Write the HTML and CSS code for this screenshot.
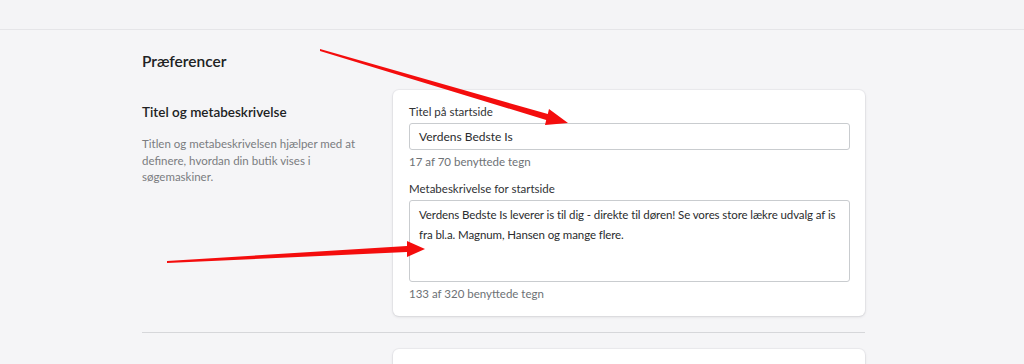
FILE: index.html
```html
<!DOCTYPE html>
<html lang="da">
<head>
  <meta charset="UTF-8" />
  <meta name="viewport" content="width=device-width, initial-scale=1.0" />
  <title>Præferencer</title>
  <link rel="stylesheet" href="styles.css">
</head>
<body>

  <div class="topbar"></div>

  <div class="page">
    <h1 class="page-title">Præferencer</h1>

    <div class="section">
      <div class="section-info">
        <h2>Titel og metabeskrivelse</h2>
        <p>Titlen og metabeskrivelsen hjælper med at definere, hvordan din butik vises i søgemaskiner.</p>
      </div>

      <div class="card">
        <label class="field-label">Titel på startside</label>
        <div class="field-input">Verdens Bedste Is</div>
        <div class="field-help">17 af 70 benyttede tegn</div>

        <label class="field-label">Metabeskrivelse for startside</label>
        <div class="field-input field-area">Verdens Bedste Is leverer is til dig - direkte til døren! Se vores store lækre udvalg af is fra bl.a. Magnum, Hansen og mange flere.</div>
        <div class="field-help">133 af 320 benyttede tegn</div>
      </div>
    </div>

    <hr class="divider">

    <div class="section section-next">
      <div class="section-info"></div>
      <div class="card card-next"></div>
    </div>
  </div>

  <!-- red arrows drawn over the screenshot -->
  <svg class="arrows" width="1024" height="364" viewBox="0 0 1024 364">
    <polygon fill="#f40d0d" points="320,49 547.8,114 549,109 568,123 545,125 546.2,120 320,51" />
    <polygon fill="#f40d0d" points="167,261 407,246 407,241 425,249 407,257 407,252 167,263" />
  </svg>

</body>
</html>
```

FILE: styles.css
```css
body {
  margin: 0;
  background-color: #f5f5f7;
  font-family: Lato, "Noto Sans", sans-serif;
  color: #202223;
  height: 364px;
  overflow: hidden;
  position: relative;
}

.topbar {
  height: 29px;
  background-color: #f4f4f6;
  border-bottom: 1px solid #e5e5e8;
}

.page {
  width: 723px;
  margin-left: 142px;
}

.page-title {
  font-size: 15.5px;
  font-weight: 600;
  margin: 20px 0 0 0;
  line-height: 22px;
}

.section {
  display: flex;
  margin-top: 18px;
}

.section-info {
  width: 251px;
}

.section-info h2 {
  font-size: 13.5px;
  font-weight: 600;
  margin: 12px 0 0 0;
  line-height: 20px;
}

.section-info p {
  font-size: 11.5px;
  color: #7a7c80;
  line-height: 16.5px;
  margin: 14px 0 0 0;
  padding-right: 10px;
}

.card {
  flex: 1;
  background-color: white;
  border-radius: 6px;
  box-shadow: 0 0 0 1px rgba(63, 63, 68, 0.04), 0 1px 3px rgba(63, 63, 68, 0.15);
  padding: 14px 15px 14px 16px;
}

.field-label {
  display: block;
  font-size: 11.5px;
  line-height: 16px;
  color: #303235;
}

.field-input {
  margin-top: 3px;
  height: 27px;
  box-sizing: border-box;
  border: 1px solid #c9cccf;
  border-radius: 3px;
  padding: 0 9px;
  font-size: 12px;
  line-height: 25px;
  color: #2a2c2e;
}

.field-area {
  height: 82px;
  padding: 4px 8px 0 9px;
  font-size: 11.5px;
  letter-spacing: -0.1px;
  line-height: 20px;
}

.field-help {
  font-size: 11.5px;
  color: #6d7175;
  line-height: 16px;
  margin-top: 4px;
  margin-bottom: 11px;
}

.field-help:last-child {
  margin-bottom: 0;
}

.divider {
  border: none;
  border-top: 1px solid #d6d7da;
  margin: 16px 0 0 0;
}

.section-next {
  margin-top: 16px;
}

.card-next {
  height: 40px;
  padding: 0;
}

.arrows {
  position: absolute;
  left: 0;
  top: 0;
  pointer-events: none;
}
```
